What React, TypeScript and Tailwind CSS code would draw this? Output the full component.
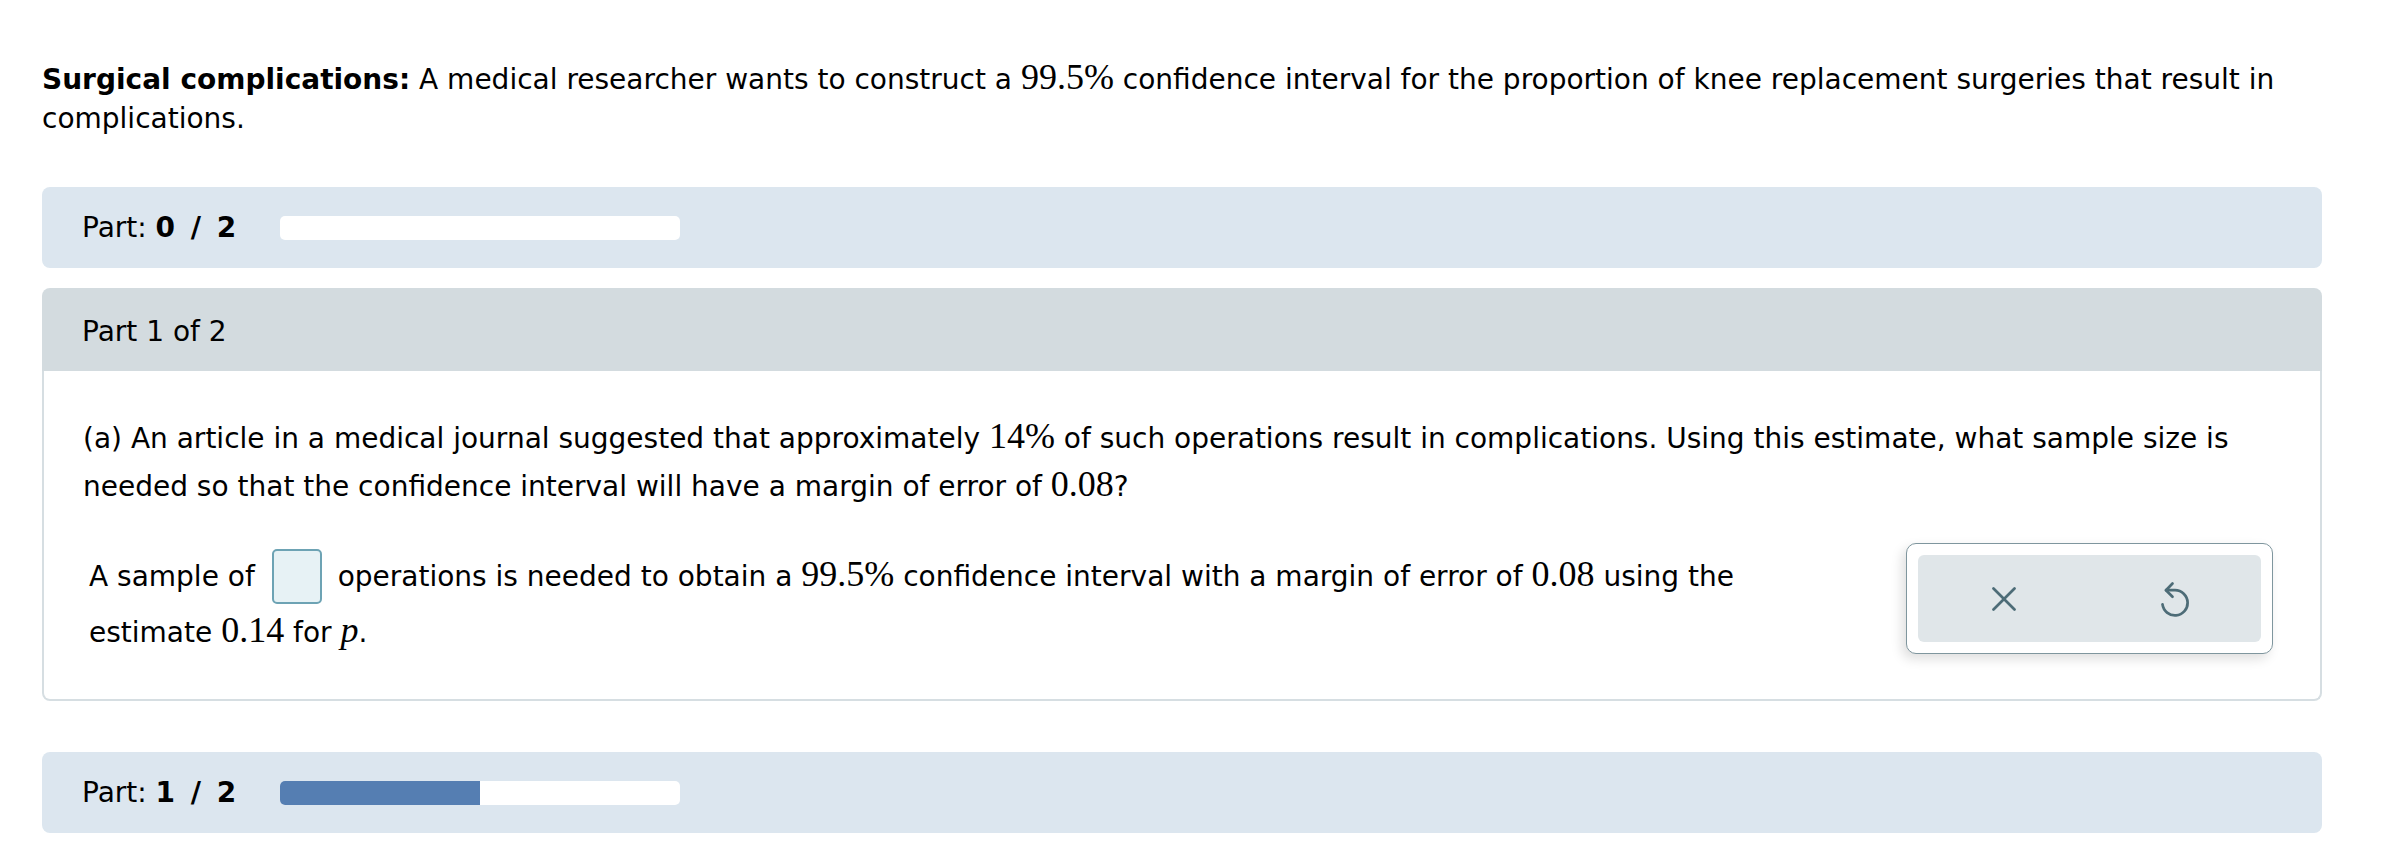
import React from 'react'

type PartProgressProps = {
  done: number
  total: number
  className?: string
}

// serif numbers, the way the math renderer shows them
const MathText = ({ children, italic }: { children: React.ReactNode, italic?: boolean }) => (
  <span
    className={`font-['Liberation_Serif','Times_New_Roman',serif] text-[36px] leading-[0] ${italic ? 'italic' : ''}`}
  >
    {children}
  </span>
)

const PartProgress = ({ done, total, className }: PartProgressProps) => {
  const pct = (done / total) * 100
  return (
    <div className={`flex items-center h-[81px] rounded-lg bg-[#dce6ef] pl-[40px] ${className ?? ''}`}>
      <div className="w-[198px] shrink-0">
        Part: <span className="font-bold tracking-[3px]">{done} / {total}</span>
      </div>
      <div className="w-[400px] h-[24px] rounded-[5px] bg-white overflow-hidden">
        <div className="h-full bg-[#557eb2]" style={{ width: `${pct}%` }} />
      </div>
    </div>
  )
}

const ClearIcon = () => (
  <svg width="24" height="24" viewBox="0 0 24 24" fill="none" stroke="#4d6c77" strokeWidth="2.7" strokeLinecap="round">
    <path d="M1.5 1.5 22.5 22.5" />
    <path d="M22.5 1.5 1.5 22.5" />
  </svg>
)

const UndoIcon = () => (
  <svg width="28" height="36" viewBox="0 0 28 36" fill="none" stroke="#4d6c77" strokeWidth="2.7" strokeLinecap="round" strokeLinejoin="round">
    <path d="M5 9.2H14A12.6 12.6 0 1 1 1.5 23.4" />
    <path d="M11.5 2.5 5 9.2 11.5 15.8" />
  </svg>
)

const AnswerTools = () => (
  <div className="w-[367px] h-[111px] shrink-0 mr-[8px] rounded-[10px] border border-[#7f969e] bg-white p-[11px] shadow-[-4px_5px_12px_rgba(0,0,0,0.13)]">
    <div className="flex h-full rounded-[6px] bg-[#e0e6e9]">
      <button className="flex flex-1 items-center justify-center">
        <ClearIcon />
      </button>
      <button className="flex flex-1 items-center justify-center">
        <UndoIcon />
      </button>
    </div>
  </div>
)

export default function App() {
  return (
    <div className="min-h-[848px] bg-white pl-[42px] pr-[62px] pt-[60px] font-['DejaVu_Sans','Verdana',sans-serif] text-[28px] text-black">
      <p className="leading-[39px]">
        <span className="font-bold">Surgical complications:</span> A medical researcher wants to construct a{' '}
        <MathText>99.5%</MathText> confidence interval for the proportion of knee replacement surgeries that result in
        complications.
      </p>

      <PartProgress done={0} total={2} className="mt-[49px]" />

      <div className="mt-[20px]">
        <div className="flex items-center h-[83px] rounded-t-lg bg-[#d3dbdf] px-[40px] pt-[5px]">Part 1 of 2</div>
        <div className="rounded-b-lg border-2 border-t-0 border-[#d6dee2] px-[39px] pt-[44px] pb-[38px]">
          <p className="leading-[48px]">
            (a) An article in a medical journal suggested that approximately <MathText>14%</MathText> of such
            operations result in complications. Using this estimate, what sample size is needed so that the
            confidence interval will have a margin of error of <MathText>0.08</MathText>?
          </p>
          <div className="mt-[32px] flex items-start">
            <div className="flex-1 pl-[6px] pr-[96px] pt-[6px] leading-[56px]">
              A sample of
              <span className="inline-block align-top ml-[17px] mr-[7px] w-[50px] h-[55px] rounded-[5px] border-2 border-[#6da3b4] bg-[#e7f2f5]" />
              {' '}operations is needed to obtain a <MathText>99.5%</MathText> confidence interval with a margin of
              error of <MathText>0.08</MathText> using the estimate <MathText>0.14</MathText> for{' '}
              <MathText italic>p</MathText>.
            </div>
            <AnswerTools />
          </div>
        </div>
      </div>

      <PartProgress done={1} total={2} className="mt-[51px]" />
    </div>
  )
}
